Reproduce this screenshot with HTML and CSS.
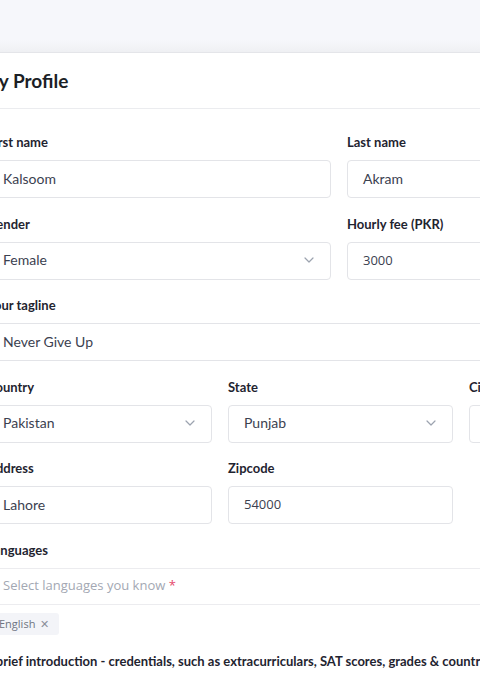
FILE: index.html
```html
<!DOCTYPE html>
<html lang="en">
<head>
<meta charset="utf-8">
<title>My Profile</title>
<link rel="stylesheet" href="styles.css">
</head>
<body>
<div class="topband"></div>
<main class="card">
  <header class="card-head">
    <h1 class="title">My Profile</h1>
  </header>
  <form class="form">
    <div class="row cols-2">
      <div class="field">
        <label class="label">First name</label>
        <div class="input">Kalsoom</div>
      </div>
      <div class="field">
        <label class="label">Last name</label>
        <div class="input">Akram</div>
      </div>
    </div>
    <div class="row cols-2">
      <div class="field">
        <label class="label">Gender</label>
        <div class="input select"><span>Female</span><svg class="chev" width="10" height="6" viewBox="0 0 10 6"><path d="M1 1l4 4 4-4" fill="none" stroke="#9ca3af" stroke-width="1.2" stroke-linecap="round" stroke-linejoin="round"/></svg></div>
      </div>
      <div class="field">
        <label class="label">Hourly fee (PKR)</label>
        <div class="input num">3000</div>
      </div>
    </div>
    <div class="row">
      <div class="field">
        <label class="label">Your tagline</label>
        <div class="input">Never Give Up</div>
      </div>
    </div>
    <div class="row cols-3">
      <div class="field">
        <label class="label">Country</label>
        <div class="input select"><span>Pakistan</span><svg class="chev" width="10" height="6" viewBox="0 0 10 6"><path d="M1 1l4 4 4-4" fill="none" stroke="#9ca3af" stroke-width="1.2" stroke-linecap="round" stroke-linejoin="round"/></svg></div>
      </div>
      <div class="field">
        <label class="label">State</label>
        <div class="input select"><span>Punjab</span><svg class="chev" width="10" height="6" viewBox="0 0 10 6"><path d="M1 1l4 4 4-4" fill="none" stroke="#9ca3af" stroke-width="1.2" stroke-linecap="round" stroke-linejoin="round"/></svg></div>
      </div>
      <div class="field">
        <label class="label">City</label>
        <div class="input select"><span>Lahore</span><svg class="chev" width="10" height="6" viewBox="0 0 10 6"><path d="M1 1l4 4 4-4" fill="none" stroke="#9ca3af" stroke-width="1.2" stroke-linecap="round" stroke-linejoin="round"/></svg></div>
      </div>
    </div>
    <div class="row cols-3">
      <div class="field">
        <label class="label">Address</label>
        <div class="input">Lahore</div>
      </div>
      <div class="field">
        <label class="label">Zipcode</label>
        <div class="input num">54000</div>
      </div>
    </div>
    <div class="row">
      <div class="field">
        <label class="label">Languages</label>
        <div class="input lang"><span class="placeholder">Select languages you know <span class="req">*</span></span></div>
        <div class="chips">
          <span class="chip">English <span class="x">✕</span></span>
        </div>
      </div>
    </div>
    <div class="row">
      <div class="field">
        <label class="label intro">A brief introduction - credentials, such as extracurriculars, SAT scores, grades &amp; countries you have studied in</label>
      </div>
    </div>
  </form>
</main>
</body>
</html>
```

FILE: styles.css
```css
* { box-sizing: border-box; }
html, body { margin: 0; padding: 0; }
body {
  background: #f5f6fa;
  font-family: Lato, "Open Sans", sans-serif;
  color: #1f2937;
  overflow: hidden;
  width: 480px;
  height: 700px;
}
.topband {
  height: 52px;
  background: linear-gradient(#f6f7fb 0, #f6f7fb 40px, #eff0f3 52px);
}
.card {
  background: #fff;
  border-top: 1px solid #e4e5e9;
  margin-left: -37px;
  width: 760px;
  min-height: 700px;
}
.card-head {
  height: 56px;
  display: flex;
  align-items: center;
  padding: 0 24px 0 18px;
  border-bottom: 1px solid #ebecef;
}
.title {
  margin: 0;
  font-size: 19px;
  font-weight: 700;
  color: #1c1f26;
}
.form {
  padding: 23px 24px 0 24px;
  display: flex;
  flex-direction: column;
  gap: 15.5px;
}
.row { display: grid; grid-template-columns: 1fr; gap: 16px; }
.row.cols-2 { grid-template-columns: 344px 344px; }
.row.cols-3 { grid-template-columns: 225px 225px 225px; }
.field { display: flex; flex-direction: column; gap: 8px; }
.label {
  font-size: 13px;
  line-height: 20px;
  font-weight: 700;
  color: #1f2430;
  white-space: nowrap;
}
.label.intro { margin-top: 0.5px; text-indent: -3px; }
.input {
  height: 38px;
  border: 1px solid #e3e4e8;
  border-radius: 4px;
  padding: 0 15px 2px 15px;
  display: flex;
  align-items: center;
  font-size: 14px;
  color: #3b4150;
}
.input.num { font-family: "Open Sans", sans-serif; font-size: 13px; }
.select { justify-content: space-between; padding-right: 16px; }
.chev { flex: none; }
.lang { height: 37px; border-color: #ececef; }
.placeholder {
  font-family: "Open Sans", sans-serif;
  font-size: 13px;
  color: #a3a8b3;
}
.req { color: #e5486b; }
.chips { display: flex; gap: 6px; }
.chip {
  height: 22px;
  background: #f3f4f8;
  border-radius: 3px;
  padding: 0 10px 0 12px;
  display: inline-flex;
  align-items: center;
  gap: 5px;
  font-family: "Open Sans", sans-serif;
  font-size: 11px;
  color: #6f7482;
}
.chip .x { font-size: 11px; color: #8a8f9b; }
```
